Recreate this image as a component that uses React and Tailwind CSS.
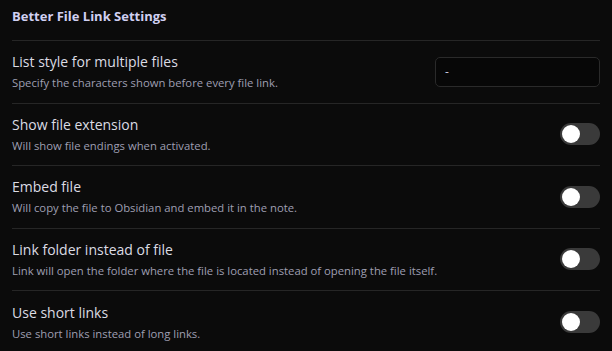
const rows = [
  {
    title: "List style for multiple files",
    desc: "Specify the characters shown before every file link.",
    input: true,
  },
  { title: "Show file extension", desc: "Will show file endings when activated." },
  {
    title: "Embed file",
    desc: "Will copy the file to Obsidian and embed it in the note.",
  },
  {
    title: "Link folder instead of file",
    desc: "Link will open the folder where the file is located instead of opening the file itself.",
  },
  { title: "Use short links", desc: "Use short links instead of long links." },
];

const Toggle = () => (
  <div className="w-[40px] h-[22px] rounded-full bg-[#3a3a3a] flex items-center px-[2px]">
    <div className="w-[18px] h-[18px] rounded-full bg-white" />
  </div>
);

const App = () => {
  return (
    <div
      className="w-[612px] h-[351px] bg-[#0b0b0b] overflow-hidden pl-[12px] pr-[12px]"
      style={{ fontFamily: '"Open Sans", "Noto Sans", sans-serif' }}
    >
      <h1 className="h-[41px] pt-[7px] text-[13px] font-bold text-[#d0d0f2] border-b border-[#262626]">
        Better File Link Settings
      </h1>
      {rows.map((r, i) => (
        <div
          key={i}
          className={`flex items-center justify-between h-[62.5px] ${
            i < rows.length - 1 ? "border-b border-[#262626]" : ""
          }`}
        >
          <div className="flex flex-col">
            <div className="text-[14px] leading-[20px] text-[#dcdce4]">
              {r.title}
            </div>
            <div className="text-[11.3px] leading-[16px] mt-[3px] text-[#9f9fb2]">
              {r.desc}
            </div>
          </div>
          {r.input ? (
            <div className="w-[165px] h-[30px] rounded-[5px] border border-[#2a2a2a] bg-[#070707] flex items-center pl-[9px] text-[12px] text-[#c8c8e0]">
              -
            </div>
          ) : (
            <Toggle />
          )}
        </div>
      ))}
    </div>
  );
};

export default App;
